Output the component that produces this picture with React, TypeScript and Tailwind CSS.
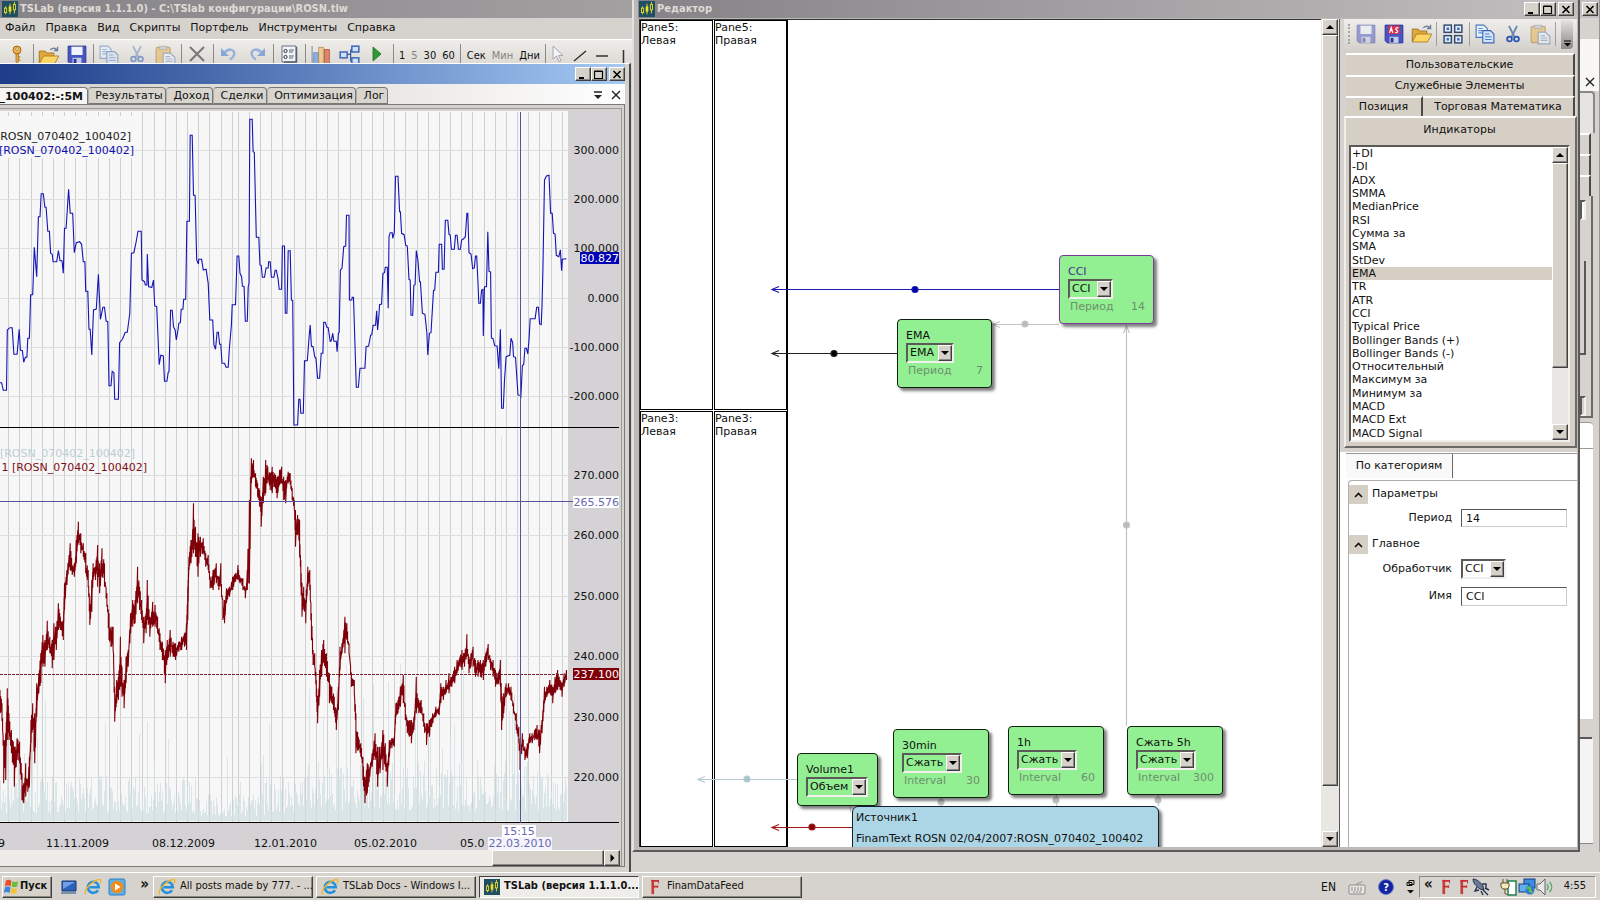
import type { ReactNode } from "react";

const raised = "border border-t-white border-l-white border-r-[#404040] border-b-[#404040] bg-[#d6d2ca] shadow-[inset_-1px_-1px_0_#8a8884]";
const sunken = "border-2 border-t-[#5c5a58] border-l-[#5c5a58] border-r-[#f2f0ec] border-b-[#f2f0ec]";
const narrow = "font-['DejaVu_Sans_Condensed','DejaVu_Sans',sans-serif] [font-stretch:condensed]";

/* ---------- icons ---------- */

function Svg({ children, size = 18, dim = false }: { children: ReactNode; size?: number; dim?: boolean }) {
  return (
    <svg width={size} height={size} viewBox="0 0 18 18" className={dim ? "shrink-0 opacity-50" : "shrink-0"} fill="none">
      {children}
    </svg>
  );
}

const Logo = () => (
  <Svg size={16}>
    <rect width="18" height="18" fill="#1f4f63" />
    <path d="M4 6v9M9 3v12M14 1v13" stroke="#f0e020" strokeWidth="1" />
    <rect x="2.8" y="8" width="2.4" height="5" fill="#1f4f63" stroke="#f0e020" />
    <rect x="7.5" y="6" width="3" height="6" fill="#f0e020" />
    <rect x="12.8" y="4" width="2.4" height="6" fill="#1f4f63" stroke="#f0e020" />
  </Svg>
);

const KeyIcon = () => (
  <Svg>
    <circle cx="9" cy="5" r="4" fill="#eeb04a" stroke="#a86a1c" />
    <circle cx="9" cy="4" r="1.3" fill="#f4f0e8" stroke="#a86a1c" strokeWidth=".6" />
    <path d="M8 9h2.4v8l-1.2 1L8 17z" fill="#eeb04a" stroke="#a86a1c" strokeWidth=".8" />
    <path d="M10.4 12h2M10.4 15h2" stroke="#a86a1c" />
  </Svg>
);

const FolderIcon = () => (
  <Svg size={22}>
    <path d="M1 15V5h5l1 1.5h6V15z" fill="#e0a83c" stroke="#9a7020" strokeWidth=".7" />
    <path d="M1 15.5 4.5 9H17l-3.5 6.5z" fill="#fbd565" stroke="#a67a20" strokeWidth=".7" />
    <path d="M10 4c2-2 4-2 5.500 0M16 1.500v3h-3" stroke="#6a7c98" strokeWidth="1.100" />
  </Svg>
);

const SaveIcon = ({ dim, all }: { dim?: boolean; all?: boolean }) => (
  <Svg size={20} dim={dim}>
    <path d="M1 1h16v16H3l-2-2z" fill="#4a55c4" stroke="#2a3488" strokeWidth=".8" />
    <rect x="4" y="1.500" width="10" height="7.500" fill={all ? "#d8304c" : "#f0f4fc"} />
    {all && <path d="M5 8l1.500-5L8 8M5.500 6h2M13 3.500c-3-1-3 1.500-1.500 2s1 3-1.500 2" stroke="#fff" />}
    <rect x="5" y="11.500" width="8" height="5.500" fill="#c4cce8" />
    <rect x="6" y="12.500" width="2.500" height="4" fill="#2a3488" />
  </Svg>
);

const CopyIcon = ({ dim }: { dim?: boolean }) => (
  <Svg size={20} dim={dim}>
    <path d="M1 1h7l3 3v8H1z" fill="#e8f0fc" stroke="#4a78b8" />
    <path d="M3 4h4M3 6h6M3 8h6" stroke="#5a90d8" />
    <path d="M7 6h7l3 3v8H7z" fill="#d4e4fa" stroke="#3868ac" />
    <path d="M9 9h4M9 11.500h6M9 14h6" stroke="#4a80cc" />
  </Svg>
);

const CutIcon = ({ dim }: { dim?: boolean }) => (
  <Svg dim={dim}>
    <path d="M5 1l5.500 11M13 1 7.500 12" stroke="#6888b0" strokeWidth="1.800" />
    <circle cx="5.500" cy="14" r="2.400" stroke="#2c58b4" strokeWidth="1.800" />
    <circle cx="12.500" cy="14" r="2.400" stroke="#2c58b4" strokeWidth="1.800" />
  </Svg>
);

const PasteIcon = () => (
  <Svg size={21} dim>
    <rect x="1" y="2" width="12" height="14" rx="1" fill="#e8b040" stroke="#9a7020" />
    <rect x="4" y="1" width="6" height="3" fill="#b8bcc4" stroke="#707880" strokeWidth=".6" />
    <path d="M7 7h6l4 3.500V17H7z" fill="#f0f4fc" stroke="#5878a8" />
    <path d="M9 10h4M9 12h6M9 14h6" stroke="#7090c0" />
  </Svg>
);

const DeleteIcon = () => (
  <Svg>
    <path d="M2 2l14 14M16 2 2 16" stroke="#77787a" strokeWidth="2" />
  </Svg>
);

const UndoIcon = ({ flip }: { flip?: boolean }) => (
  <Svg>
    <g transform={flip ? "matrix(-1 0 0 1 18 0)" : undefined}>
      <path d="M4 8c5-6 12-3 10 2-.6 2-2 3.500-4 4.500" stroke="#9ab2da" strokeWidth="2.600" />
      <path d="M1 3v8h8z" fill="#8aa6d6" />
    </g>
  </Svg>
);

const ListIcon = () => (
  <Svg>
    <path d="M2 1h14v16H2z" fill="#f0f4f8" stroke="#687080" />
    <path d="M16.500 2v15H4" stroke="#586070" strokeWidth="1.500" />
    <circle cx="5.500" cy="6" r="1.600" stroke="#30343c" />
    <circle cx="5.500" cy="12" r="1.600" stroke="#30343c" />
    <path d="M9 5h5M9 7h4M9 11h5M9 13h4" stroke="#586478" />
  </Svg>
);

const BarsIcon = () => (
  <Svg size={20}>
    <path d="M1 1v16h16" stroke="#8890a0" />
    <rect x="2.500" y="7" width="4" height="10" fill="#8ab0e0" stroke="#5478a8" strokeWidth=".6" />
    <rect x="7" y="2" width="4" height="15" fill="#f0c890" stroke="#a88048" strokeWidth=".6" />
    <rect x="12" y="4" width="4.500" height="13" fill="#e08468" stroke="#a04c38" strokeWidth=".6" />
  </Svg>
);

const FlowIcon = () => (
  <Svg size={21}>
    <path d="M6 8h4M10 4v10M10 4h2M10 14h2" stroke="#3a5490" />
    <rect x="1" y="6" width="6" height="5" fill="#cfe0fa" stroke="#3c68b8" strokeWidth="1.300" />
    <rect x="11" y="1" width="6" height="5" fill="#cfe0fa" stroke="#3c68b8" strokeWidth="1.300" />
    <rect x="11" y="11" width="6" height="5" fill="#cfe0fa" stroke="#3c68b8" strokeWidth="1.300" />
  </Svg>
);

const PlayIcon = () => (
  <Svg>
    <path d="M5 2l8 7-8 7z" fill="#2f9a34" stroke="#1c6c22" strokeWidth=".8" />
  </Svg>
);

const PointerIcon = () => (
  <Svg>
    <path d="M4 1v13l3.500-3 2.500 5.500 2-1-2.500-5H14z" fill="#f4f4f6" stroke="#a4a8b4" />
  </Svg>
);

const GridIcon = () => (
  <Svg size={20}>
    {[1, 10.5].map((x) =>
      [1, 10.5].map((y) => (
        <g key={`${x}-${y}`}>
          <rect x={x} y={y} width="6.500" height="6.500" fill="#e0ecfc" stroke="#34486c" strokeWidth="1.300" />
          <rect x={x + 2.2} y={y + 2.2} width="2.200" height="2.200" fill="#3a68c0" />
        </g>
      ))
    )}
  </Svg>
);

const IeIcon = () => (
  <Svg>
    <path d="M14 12.200A5.500 5.500 0 1 1 14.800 9.200H5.500" stroke="#2390dd" strokeWidth="2.600" />
    <path d="M1.500 16.500C-.5 12 9 1.500 16 1.500c1.500.5 1 2.500 0 4" stroke="#f0b428" strokeWidth="1.300" />
  </Svg>
);

const MediaIcon = () => (
  <Svg>
    <rect x="1" y="1" width="16" height="16" rx="1.500" fill="#5ab0ea" stroke="#2a80c4" />
    <circle cx="9" cy="9" r="6.300" fill="#f08c1c" />
    <path d="M7 5.500 12.500 9 7 12.500z" fill="#fff" />
  </Svg>
);

const DesktopIcon = () => (
  <Svg>
    <path d="M2 3h14v10H2z" fill="#2c62ba" stroke="#18356c" />
    <path d="M3 4h12L3 11z" fill="#6fa0e8" />
    <path d="M1 15h15" stroke="#7890a8" strokeWidth="2" />
  </Svg>
);

const FlagIcon = () => (
  <Svg size={17}>
    <path d="M3 3c2-1.500 4-1.500 6 0L8 9C6 7.500 4 7.500 2 9z" fill="#e8502c" />
    <path d="M10 3.500c2 1 4 1 6 0L15 9c-2 1-4 1-6 0z" fill="#6cbc3c" />
    <path d="M2 10c2-1.500 4-1.500 6 0l-1 6c-2-1.500-4-1.500-6 0z" fill="#3c84dc" />
    <path d="M9 10.500c2 1 4 1 6 0L14 16c-2 1-4 1-6 0z" fill="#f4c430" />
  </Svg>
);

const FinamIcon = () => (
  <Svg size={16}>
    <path d="M6.500 1v16" stroke="#c83c3c" strokeWidth="3" />
    <path d="M5 2h8M6 8.500h6" stroke="#c82c30" strokeWidth="2" />
    <path d="M13 1v4M12 7v3" stroke="#c82c30" />
  </Svg>
);

const Triangle = ({ up, right }: { up?: boolean; right?: boolean }) => (
  <svg width="8" height="8" viewBox="0 0 8 8" className="shrink-0">
    <path d={right ? "M2.500 0v8l4-4z" : up ? "M0 6h8L4 2z" : "M0 2h8L4 6z"} fill="#000" />
  </svg>
);

/* ---------- shared bits ---------- */

function CaptionButton({ kind }: { kind: "min" | "max" | "close" }) {
  return (
    <button aria-label={kind} className={`flex h-[14px] w-4 items-center justify-center ${raised}`}>
      <svg width="10" height="9" viewBox="0 0 10 9" fill="none" stroke="#000">
        {kind === "min" && <path d="M1 8h5" strokeWidth="2" />}
        {kind === "max" && <path d="M.5 1.500h8v7h-8zM.5 1h8" strokeWidth="1.200" />}
        {kind === "close" && <path d="M1.500 1l7 7M8.500 1l-7 7" strokeWidth="1.600" />}
      </svg>
    </button>
  );
}

function Captions() {
  return (
    <div className="ml-auto flex items-center">
      <CaptionButton kind="min" />
      <CaptionButton kind="max" />
      <span className="w-[2px]" />
      <CaptionButton kind="close" />
    </div>
  );
}

function ScrollColumn({ thumb }: { thumb: string }) {
  return (
    <div className="flex w-4 shrink-0 flex-col bg-[#e9e7e4]">
      <button aria-label="up" className={`flex h-4 shrink-0 items-center justify-center ${raised}`}>
        <Triangle up />
      </button>
      <div className={`${thumb} ${raised}`} />
      <button aria-label="down" className={`mt-auto flex h-4 shrink-0 items-center justify-center ${raised}`}>
        <Triangle />
      </button>
    </div>
  );
}

function Combo({ id, label, value, width, tone }: { id: string; label: string; value: string; width: string; tone: string }) {
  return (
    <div className={`relative h-5 ${width} ${sunken} ${tone}`}>
      <select id={id} aria-label={label} className="block h-full w-full appearance-none bg-transparent pl-[2px] leading-4 outline-none">
        <option>{value}</option>
      </select>
      <span className={`pointer-events-none absolute inset-y-0 right-0 flex w-[14px] items-center justify-center ${raised}`}>
        <Triangle />
      </span>
    </div>
  );
}

/* ---------- chart ---------- */

// x, y pairs on a 2.45 x 3 grid
const CCI =
  "0,848 4,848 8,871 16,871 18,690 24,683 30,683 34,763 42,763 47,688 50,750 55,752 58,787 62,772 66,772 68,715 72,715 75,584 80,584 84,442 90,530 94,350 98,350 101,281 106,281 110,322 113,322 117,394 121,394 124,460 128,463 130,485 139,485 143,452 147,482 152,482 155,520 158,385 162,385 168,268 172,340 178,340 182,458 187,428 195,425 200,433 204,485 208,485 210,574 215,574 218,688 221,688 225,765 229,630 236,627 241,523 246,658 252,622 256,622 260,663 264,665 267,857 272,857 275,814 279,818 281,898 290,898 293,728 300,718 307,697 312,697 318,640 322,460 328,458 334,423 338,394 346,394 348,540 354,545 356,555 360,555 361,462 364,560 372,562 376,540 379,617 384,620 390,794 394,766 400,768 403,844 409,844 412,817 414,815 418,631 422,631 425,680 429,690 432,720 436,690 438,670 442,668 444,628 448,628 450,598 455,598 458,364 464,364 466,106 471,106 474,286 478,286 482,480 486,492 487,478 494,478 498,510 505,508 510,550 514,660 521,660 524,735 528,748 532,697 535,697 538,733 541,733 544,790 550,790 554,802 559,802 562,745 567,675 569,614 577,614 581,468 585,468 588,520 592,530 594,558 598,560 601,664 606,664 608,560 610,550 612,58 618,58 620,155 623,157 628,412 634,412 637,495 640,497 643,532 648,532 652,504 657,504 658,485 662,485 665,532 671,532 674,511 677,511 681,535 684,568 690,568 692,438 697,438 699,640 703,640 706,452 711,452 714,600 717,602 720,975 729,975 732,898 735,898 737,940 743,940 746,782 753,782 758,700 760,675 763,738 767,740 771,770 774,775 778,835 783,835 787,760 791,760 793,667 797,667 801,682 804,683 809,724 812,722 815,700 818,724 824,724 826,755 829,700 831,697 834,510 838,505 842,440 847,438 849,346 855,346 856,600 862,600 863,592 866,592 873,862 878,862 882,805 894,805 897,740 903,738 908,706 911,704 914,676 920,676 923,632 925,690 928,650 930,614 935,612 938,520 942,518 944,502 949,502 951,625 953,410 956,398 961,398 962,415 966,398 969,229 975,229 979,335 981,335 984,400 990,404 994,436 998,438 1002,538 1005,540 1007,646 1011,646 1014,556 1017,554 1020,452 1024,482 1028,545 1030,545 1035,640 1041,643 1046,700 1048,765 1052,700 1056,698 1062,572 1065,570 1068,517 1074,517 1076,433 1082,433 1084,508 1088,508 1091,361 1097,361 1100,403 1103,405 1106,448 1113,448 1116,406 1120,406 1123,448 1128,448 1131,420 1135,417 1140,411 1144,340 1146,340 1149,458 1154,462 1158,506 1162,504 1165,468 1168,468 1171,550 1173,610 1177,610 1180,570 1183,568 1184,708 1187,560 1192,560 1195,395 1198,514 1202,516 1204,714 1208,716 1212,737 1218,738 1222,806 1226,688 1229,925 1233,925 1236,840 1240,770 1249,766 1252,715 1256,728 1258,770 1263,772 1269,885 1275,886 1276,895 1280,796 1283,794 1286,745 1290,745 1293,762 1296,720 1299,656 1311,656 1315,622 1319,622 1322,672 1326,674 1328,620 1330,510 1334,240 1339,228 1345,226 1349,340 1353,340 1356,400 1360,402 1363,466 1369,470 1373,450 1376,512 1378,478 1388,476";

// x, high, low on the same grid
const PRICE =
  "0,810,880 5,850,900 9,960,1090 14,940,1080 18,805,960 22,880,960 28,930,1000 35,980,1100 42,955,1020 48,965,1030 54,1060,1140 58,1090,1150 63,1030,1130 68,1080,1115 72,1010,1100 76,900,970 80,850,930 85,880,1030 90,790,890 95,760,820 100,700,790 105,645,740 110,660,740 116,602,690 122,650,700 128,660,745 132,610,720 138,620,690 143,550,630 148,590,630 155,600,660 158,490,570 164,450,495 172,370,450 177,435,465 182,430,470 187,360,430 192,305,370 198,340,400 204,370,410 210,400,460 216,450,500 220,560,615 225,480,575 228,430,480 234,440,480 239,375,500 244,430,520 250,385,470 256,430,500 262,520,560 267,580,660 272,620,680 277,620,690 281,800,905 286,780,850 290,770,840 295,650,800 299,740,830 304,780,865 309,710,790 314,690,740 320,580,640 325,540,620 331,540,610 337,440,550 342,500,570 347,540,600 352,590,670 358,580,640 361,480,600 367,590,650 374,545,620 380,555,620 386,590,640 392,640,690 398,665,720 405,690,790 410,660,720 417,630,710 424,665,710 430,670,720 438,665,695 445,650,690 452,640,680 457,610,690 460,500,600 463,410,450 468,360,430 474,250,400 479,320,410 485,340,470 491,350,410 498,355,400 504,400,440 510,405,450 515,470,505 522,450,510 530,430,490 536,470,510 541,430,500 546,540,600 550,540,610 555,505,550 562,500,530 570,470,510 577,460,485 583,435,480 588,470,490 595,475,510 601,505,535 606,450,510 611,240,490 616,115,190 621,120,170 626,160,200 631,190,230 636,210,260 640,230,320 645,170,250 651,120,220 656,140,190 662,160,210 667,140,220 673,160,200 679,170,235 685,150,195 690,140,190 695,170,240 700,180,250 706,155,190 711,160,190 716,205,240 721,240,270 724,270,380 729,285,345 734,300,410 737,420,500 740,490,590 744,500,560 749,540,610 754,440,500 759,450,510 763,580,660 767,690,735 771,700,740 775,780,830 778,830,910 783,750,830 788,690,770 793,660,730 800,700,770 807,760,850 813,800,850 819,830,880 824,870,930 829,800,870 833,680,750 838,670,700 845,590,700 850,610,660 855,670,700 861,760,800 868,780,820 872,880,1000 878,950,990 884,970,1010 889,1010,1080 894,1070,1150 900,1030,1120 906,1040,1070 912,1000,1040 919,940,1020 925,980,1100 931,980,1060 938,930,1050 944,970,1040 949,1030,1100 954,960,1010 960,955,985 966,950,980 970,850,890 975,840,880 981,800,860 988,765,850 993,850,900 998,900,940 1003,900,950 1008,900,970 1014,890,930 1020,770,880 1026,840,880 1032,840,880 1038,880,920 1045,910,975 1052,900,950 1060,880,910 1068,860,890 1076,860,885 1080,790,850 1086,800,840 1093,780,820 1100,760,820 1107,770,800 1114,740,790 1120,720,760 1127,710,740 1132,690,750 1138,700,740 1144,643,710 1149,710,760 1154,700,740 1159,680,740 1165,720,770 1171,720,770 1177,720,770 1184,720,780 1190,700,740 1196,672,720 1202,720,750 1208,720,770 1214,750,800 1220,760,790 1226,720,800 1229,820,930 1234,820,880 1240,790,830 1246,790,820 1252,800,840 1258,850,880 1265,880,930 1271,920,970 1274,970,1050 1280,940,980 1286,980,1020 1292,970,1015 1298,940,970 1304,940,970 1310,930,960 1316,915,960 1322,930,1000 1328,900,940 1334,800,850 1340,800,830 1347,780,820 1354,800,850 1360,770,820 1366,750,810 1370,770,800 1377,790,830 1382,760,800 1388,750,780";

function makeRandom(seed: number) {
  let s = seed;
  return () => {
    s = (s * 16807) % 2147483647;
    return s / 2147483647;
  };
}

const parse = (s: string) => s.split(" ").map((p) => p.split(",").map(Number));

const cciPath = "M" + parse(CCI).map(([x, y]) => `${(x / 2.45).toFixed(1)} ${(y / 3 + 100).toFixed(1)}`).join("L");

function buildPrice() {
  const rnd = makeRandom(77);
  const rows = parse(PRICE);
  const out: string[] = [];
  rows.forEach(([x, hi, lo], i) => {
    const [nx, nhi, nlo] = rows[i + 1] ?? [x, hi, lo];
    for (let k = 0; k < 3; k++) {
      const t = k / 3;
      const h = hi + (nhi - hi) * t;
      const l = lo + (nlo - lo) * t;
      const squeeze = k === 0 ? 0 : (l - h) * 0.48;
      const px = ((x + (nx - x) * t) / 2.45).toFixed(1);
      out.push(`${px} ${((h + squeeze * rnd()) / 3 + 420).toFixed(1)}`);
      out.push(`${px} ${((l - squeeze * rnd()) / 3 + 420).toFixed(1)}`);
    }
  });
  return "M" + out.join("L");
}

function buildVolume() {
  const rnd = makeRandom(4021);
  let d = "";
  for (let x = 0; x < 567; x++) {
    const busy = x > 300 && x < 560 ? 1.3 : x > 195 && x < 265 ? 0.6 : 1;
    const spike = rnd() > 0.93 ? 45 + rnd() * 45 : 0;
    const h = (8 + Math.pow(rnd(), 1.5) * 38 + spike) * busy;
    d += `M${x + 0.5} 821V${(821 - h).toFixed(0)}`;
  }
  return d + "M501.5 821V436";
}

const pricePath = buildPrice();
const volumePath = buildVolume();

const gridX = [
  ...Array.from({ length: 21 }, (_, i) => Math.round(8.3 + i * 11.17) + 0.5),
  ...Array.from({ length: 30 }, (_, i) => Math.round(237.8 + i * 11.17) + 0.5),
];

const cciTicks: [number, string][] = [
  [150, "300.000"], [199, "200.000"], [248, "100.000"], [298, "0.000"], [347, "-100.000"], [396, "-200.000"],
];
const priceTicks: [number, string][] = [
  [475, "270.000"], [535, "260.000"], [596, "250.000"], [656, "240.000"], [717, "230.000"], [777, "220.000"],
];
const dates: [number, string][] = [
  [46, "11.11.2009"], [152, "08.12.2009"], [254, "12.01.2010"], [354, "05.02.2010"], [460, "05.0"],
];

function Chart() {
  return (
    <svg className="min-h-0 w-full flex-1 bg-[#d4d2d4] text-[11px]" role="img" aria-label="ROSN">
      <g transform="translate(0 -111)">
        <rect y="111" width="568" height="712" fill="#f7f7f7" />
        <g shapeRendering="crispEdges">
          {gridX.map((x) => (
            <path key={x} d={`M${x} ${x < 140 ? 427 : 112}V823${x < 140 ? `M${x} 112v4M${x} 158V427` : ""}`} stroke="#cfcfcf" />
          ))}
          {[...cciTicks, ...priceTicks].map(([y]) => (
            <path key={y} d={`M0 ${y + 0.5}H568`} stroke="#dedede" />
          ))}
        </g>
        <path d={volumePath} stroke="#cfdfe2" strokeWidth="1" opacity=".75" shapeRendering="crispEdges" />
        <path d={pricePath} fill="none" stroke="#7f0008" strokeWidth="1.100" />
        <path d={cciPath} fill="none" stroke="#1414b4" strokeWidth="1.100" />
        <g shapeRendering="crispEdges">
          <path d="M0 427.500H619M0 822.500H619" stroke="#000" />
          <path d="M0 674.500H568" stroke="#7f2030" strokeDasharray="3 1" />
          <path d="M0 501.500H573M520.500 112V823" stroke="#54549c" />
        </g>
        <g fill="#111">
          {[...cciTicks, ...priceTicks].map(([y, t]) => (
            <text key={t} x="619" y={y + 4} textAnchor="end">{t}</text>
          ))}
          {dates.map(([x, t]) => (
            <text key={t} x={x} y="847">{t}</text>
          ))}
          <text x="-2" y="847">9</text>
        </g>
        <rect x="580" y="252" width="39" height="12" fill="#0000b4" />
        <text x="619" y="262" textAnchor="end" fill="#fff">80.827</text>
        <rect x="573" y="496" width="46" height="12" fill="#fff" />
        <text x="619" y="506" textAnchor="end" fill="#6a6ab0">265.576</text>
        <rect x="573" y="668" width="46" height="12" fill="#7f0008" />
        <text x="619" y="678" textAnchor="end" fill="#fff">237.100</text>
        <rect x="502" y="825" width="34" height="12" fill="#fff" />
        <text x="519" y="835" textAnchor="middle" fill="#6a6ab0">15:15</text>
        <rect x="488" y="837" width="64" height="13" fill="#f4f4fc" />
        <text x="520" y="847" textAnchor="middle" fill="#6a6ab0">22.03.2010</text>
        <text x="131" y="140" textAnchor="end" fill="#222">[ROSN_070402_100402]</text>
        <text x="134" y="154" textAnchor="end" fill="#0f0fae">[ROSN_070402_100402]</text>
        <text x="135" y="457" textAnchor="end" fill="#bccfd2">[ROSN_070402_100402]</text>
        <text x="147" y="471" textAnchor="end" fill="#7f0f18">1 [ROSN_070402_100402]</text>
      </g>
    </svg>
  );
}

/* ---------- left window ---------- */

const menu = ["Файл", "Правка", "Вид", "Скрипты", "Портфель", "Инструменты", "Справка"];

const tools: ([string, ReactNode] | null)[] = [
  ["key", <KeyIcon />], null,
  ["open", <FolderIcon />], ["save", <SaveIcon />], null,
  ["copy", <CopyIcon dim />], ["cut", <CutIcon dim />], ["paste", <PasteIcon />], null,
  ["delete", <DeleteIcon />], null,
  ["undo", <UndoIcon />], ["redo", <UndoIcon flip />], null,
  ["list", <ListIcon />], null,
  ["chart", <BarsIcon />], ["scheme", <FlowIcon />], ["run", <PlayIcon />],
];

const Sep = () => (
  <span className="flex h-full w-1 shrink-0 justify-center pt-1">
    <span className="h-full w-px bg-[#8c8a88]" />
  </span>
);

const chartTabs: [string, string][] = [
  ["Результаты", "w-[78px]"], ["Доход", "w-[47px]"], ["Сделки", "w-[54px]"], ["Оптимизация", "w-[89px]"], ["Лог", "w-8"],
];

function MainWindow() {
  return (
    <section className="flex min-w-0 flex-col overflow-hidden bg-[#d6d3ce]">
      <header className={`flex h-[18px] shrink-0 items-center gap-[2px] bg-linear-to-r from-[#858387] to-[#a3a0a2] pl-[2px] text-[11px] font-bold whitespace-nowrap text-[#dedbd6] ${narrow}`}>
        <Logo />
        <h1>TSLab (версия 1.1.1.0) - C:\TSlab конфигурации\ROSN.tlw</h1>
      </header>
      <nav className="flex h-[21px] shrink-0 items-center gap-[10px] pl-[5px] text-[11px]">
        {menu.map((m) => (
          <button key={m}>{m}</button>
        ))}
      </nav>
      <div className="flex h-6 shrink-0 items-start overflow-hidden border-t border-white bg-linear-to-b from-[#efedea] to-[#dedbd6] pl-[3px] text-[11px]">
        {tools.map((t, i) =>
          t ? (
            <button key={i} aria-label={t[0]} className="flex w-7 shrink-0 justify-center pt-[5px]">
              {t[1]}
            </button>
          ) : (
            <Sep key={i} />
          )
        )}
        <Sep />
        <div className={`flex gap-[6px] px-1 pt-2 ${narrow}`}>
          <button>1</button>
          <button className="text-[#85827e]">5</button>
          <button>30</button>
          <button>60</button>
        </div>
        <Sep />
        <div className={`flex gap-[6px] px-1 pt-2 ${narrow}`}>
          <button>Сек</button>
          <button className="text-[#85827e]">Мин</button>
          <button>Дни</button>
        </div>
        <Sep />
        <button aria-label="pointer" className="flex w-[26px] justify-center pt-[5px]"><PointerIcon /></button>
        <svg className="mt-2 h-4 w-16 shrink-0" stroke="#333" strokeWidth="1.500" fill="none">
          <path d="M6 13 18 3M28 8h12M55.500 2v13" />
        </svg>
      </div>

      <div className="mr-px flex min-h-0 flex-1 flex-col border-t border-r-2 border-t-white border-r-[#4c4a4a] pr-1">
        <header className="flex h-5 shrink-0 items-center bg-linear-to-r from-[#1e3c88] to-[#a6caf4]">
          <Captions />
        </header>
        <div className="flex h-5 shrink-0 items-end bg-linear-to-r from-[#d6d3ce] via-[#e4e1de] to-white text-[11px]">
          <button className="h-[17px] w-[88px] overflow-hidden rounded-tr border-t border-r border-[#7a7876] bg-[#f6f5f4] font-bold whitespace-nowrap">
            <span className="flex justify-end pr-1 leading-[15px]">_100402:-:5M</span>
          </button>
          {chartTabs.map(([t, w]) => (
            <button key={t} className={`h-[17px] rounded-t border border-l-[#b0aeaa] border-[#7a7876] bg-[#d8d5cf] pl-1 leading-[15px] whitespace-nowrap ${w}`}>
              {t}
            </button>
          ))}
          <span className="mr-1 mb-1 ml-auto flex items-center gap-2">
            <button aria-label="tab list">
              <svg width="10" height="10" viewBox="0 0 10 10"><path d="M1 2h8" stroke="#222" strokeWidth="1.500" /><path d="M1 5h8L5 9z" fill="#222" /></svg>
            </button>
            <button aria-label="close tab">
              <svg width="10" height="10" viewBox="0 0 10 10"><path d="M1 1l8 8M9 1 1 9" stroke="#222" strokeWidth="1.400" /></svg>
            </button>
          </span>
        </div>
        <div className="mb-[5px] flex min-h-0 flex-1 flex-col border-y border-r border-[#7c7a78] pt-[3px] pr-[2px]">
          <div className="flex min-h-0 flex-1 flex-col border-t border-r border-[#9c9a98] pt-[2px] pr-px">
            <Chart />
            <div className="flex h-4 shrink-0 justify-end bg-[#eeece8]">
              <div className={`w-[112px] ${raised}`} />
              <button aria-label="right" className={`flex w-4 items-center justify-center ${raised}`}>
                <Triangle right />
              </button>
            </div>
          </div>
        </div>
      </div>
    </section>
  );
}

/* ---------- editor ---------- */

interface NodeProps {
  name: string;
  value: string;
  box: string;
  combo: string;
  param?: [string, string];
  active?: boolean;
}

const nodes: NodeProps[] = [
  { name: "CCI", value: "CCI", box: "left-[419px] top-[235px] w-[95px] h-[69px]", combo: "w-[45px]", param: ["Период", "14"], active: true },
  { name: "EMA", value: "EMA", box: "left-[257px] top-[299px] w-[95px] h-[69px]", combo: "w-[48px]", param: ["Период", "7"] },
  { name: "Volume1", value: "Объем", box: "left-[157px] top-[733px] w-[81px] h-[53px]", combo: "w-[62px]" },
  { name: "30min", value: "Сжать", box: "left-[253px] top-[709px] w-[96px] h-[69px]", combo: "w-[60px]", param: ["Interval", "30"] },
  { name: "1h", value: "Сжать", box: "left-[368px] top-[706px] w-[96px] h-[69px]", combo: "w-[60px]", param: ["Interval", "60"] },
  { name: "Сжать 5h", value: "Сжать", box: "left-[487px] top-[706px] w-[96px] h-[69px]", combo: "w-[60px]", param: ["Interval", "300"] },
];

function Node({ name, value, box, combo, param, active }: NodeProps) {
  return (
    <div
      className={`absolute rounded border bg-[#92ef92] px-2 pt-2 shadow-[3px_3px_3px_rgba(0,0,0,0.5)] ${box} ${active ? "border-[#7a3c9c]" : "border-[#102010]"}`}
    >
      <div className={`leading-[15px] ${active ? "text-[#4a2c8c]" : ""}`}>{name}</div>
      <Combo id={`node-${name}`} label={name} value={value} width={combo} tone="bg-[#92ef92]" />
      {param && (
        <div className="flex justify-between pl-[2px] leading-[15px] text-[#6f8f6f]">
          <span>{param[0]}</span>
          <span>{param[1]}</span>
        </div>
      )}
    </div>
  );
}

function Edges() {
  return (
    <svg className="absolute inset-0 h-full w-full" fill="none">
      <g stroke="#1c1cae" strokeWidth="1.200"><path d="M419 269.500H132M139 266.500l-7 3 7 3" /><circle cx="275" cy="269.500" r="3" fill="#0000b4" /></g>
      <g stroke="#222" strokeWidth="1.200"><path d="M257 333.500H132M139 330.500l-7 3 7 3" /><circle cx="194" cy="333.500" r="3" fill="#000" /></g>
      <g stroke="#c4c4c4" strokeWidth="1.200">
        <path d="M419 304.500H353M360 301.500l-7 3 7 3" /><circle cx="385" cy="304" r="3" fill="#bbb" />
        <path d="M486.500 706V306M483.500 313l3-7 3 7" /><circle cx="486.500" cy="505" r="3" fill="#bbb" />
        <path d="M301.500 778v8M416.500 775v11M518.500 775v11M210.500 786v6" />
        <circle cx="301" cy="782" r="3" fill="#bbb" /><circle cx="416" cy="780" r="3" fill="#bbb" /><circle cx="518" cy="780" r="3" fill="#bbb" />
      </g>
      <g stroke="#b4cdd0" strokeWidth="1.200"><path d="M157 759.500H58M65 756.500l-7 3 7 3" /><circle cx="107" cy="759" r="3" fill="#a8c4c8" /></g>
      <g stroke="#a01818" strokeWidth="1.200"><path d="M212 807.500H132M139 804.500l-7 3 7 3" /><circle cx="172" cy="807" r="3" fill="#7f0008" /></g>
    </svg>
  );
}

const Pane = ({ n, side }: { n: number; side: string }) => (
  <div className="border border-black leading-[13px]">
    Pane{n}:<br />
    {side}
  </div>
);

function Canvas() {
  return (
    <div className="relative min-w-0 flex-1 overflow-hidden border-t border-l border-[#333] bg-white text-[11px]">
      <div className="flex h-full w-[148px] flex-col gap-px border-r border-black">
        <div className="grid h-[390px] shrink-0 grid-cols-2 gap-px">
          <Pane n={5} side="Левая" />
          <Pane n={5} side="Правая" />
        </div>
        <div className="grid min-h-0 flex-1 grid-cols-2 gap-px">
          <Pane n={3} side="Левая" />
          <Pane n={3} side="Правая" />
        </div>
      </div>
      <Edges />
      {nodes.map((n) => (
        <Node key={n.name} {...n} />
      ))}
      <div className="absolute top-[786px] left-[212px] h-[60px] w-[307px] rounded-md border border-[#102030] bg-[#acd6e6] px-[3px] pt-[2px] whitespace-nowrap shadow-[3px_3px_3px_rgba(0,0,0,0.5)]">
        <div className="leading-[18px]">Источник1</div>
        <div className="pt-[2px] leading-[20px]">FinamText ROSN 02/04/2007:ROSN_070402_100402</div>
      </div>
    </div>
  );
}

const indicators = [
  "+DI", "-DI", "ADX", "SMMA", "MedianPrice", "RSI", "Сумма за", "SMA", "StDev", "EMA", "TR", "ATR", "CCI",
  "Typical Price", "Bollinger Bands (+)", "Bollinger Bands (-)", "Относительный", "Максимум за", "Минимум за",
  "MACD", "MACD Ext", "MACD Signal",
];

const catTab = "border-t-2 border-r-2 border-t-white border-r-[#4c4a48] bg-[#d6cfc5]";

const GroupButton = ({ title }: { title: string }) => (
  <div className="flex h-[19px] items-center gap-1">
    <button aria-label={title} className="flex h-[19px] w-[19px] items-center justify-center bg-[#d6cfc5]">
      <svg width="9" height="6" viewBox="0 0 9 6" fill="none"><path d="M1 5l3.500-3.500L8 5" stroke="#111" strokeWidth="1.600" /></svg>
    </button>
    <span>{title}</span>
  </div>
);

function SidePanel() {
  return (
    <aside className="flex w-[238px] shrink-0 flex-col border-l border-[#555] bg-[#d6d3ce] text-[11px]">
      <div className="ml-1 flex h-[34px] shrink-0 items-center bg-linear-to-b from-[#f0eeec] to-[#d2cfca] pr-1 pb-1">
        <span className="mr-px ml-[4px] h-5 w-0 border-l-2 border-dotted border-[#a8a6a4]" />
        <button aria-label="save" className="flex w-[29px] justify-center"><SaveIcon dim /></button>
        <button aria-label="save as" className="flex w-7 justify-center"><SaveIcon all /></button>
        <button aria-label="open" className="flex w-7 justify-center"><FolderIcon /></button>
        <span className="h-6 w-px bg-[#a09e9c]" />
        <button aria-label="layout" className="flex w-8 justify-center"><GridIcon /></button>
        <span className="h-6 w-px bg-[#a09e9c]" />
        <button aria-label="copy" className="flex w-[29px] justify-center"><CopyIcon /></button>
        <button aria-label="cut" className="flex w-[27px] justify-center"><CutIcon /></button>
        <button aria-label="paste" className="flex w-[29px] justify-center"><PasteIcon /></button>
        <span className="h-6 w-px bg-[#a09e9c]" />
        <button aria-label="more" className="ml-auto flex h-[29px] w-3 items-end justify-center rounded-r bg-linear-to-b from-[#e4e2e0] to-[#8c8a88] pb-[2px]">
          <svg width="7" height="7" viewBox="0 0 7 7"><path d="M0 1h7" stroke="#000" /><path d="M0 3h7L3.500 6.500z" fill="#000" /></svg>
        </button>
      </div>
      <div className="mr-[2px] ml-[6px] flex shrink-0 flex-col text-center">
        <button className={`h-[22px] ${catTab}`}>Пользовательские</button>
        <button className={`h-[21px] ${catTab}`}>Служебные Элементы</button>
        <div className="flex h-[20px]">
          <button className={`w-[77px] ${catTab}`}>Позиция</button>
          <button className={`flex-1 ${catTab}`}>Торговая Математика</button>
        </div>
      </div>
      <div className="ml-1 flex h-[332px] shrink-0 flex-col border-2 border-t-white border-r-[#6c6a68] border-b-[#6c6a68] border-l-[#f0eeea] bg-[#d6cfc5] pr-[5px] pb-1 pl-[3px]">
        <h2 className="h-[27px] shrink-0 text-center leading-[23px]">Индикаторы</h2>
        <div className={`flex min-h-0 flex-1 bg-white ${sunken}`}>
          <ul className="flex min-w-0 flex-1 flex-col">
            {indicators.map((t) => (
              <li key={t} className={`flex min-h-0 flex-1 items-center pl-px leading-[13px] whitespace-nowrap ${t === "EMA" ? "bg-[#d6cfc5]" : ""}`}>
                {t}
              </li>
            ))}
          </ul>
          <ScrollColumn thumb="h-[205px]" />
        </div>
      </div>
      <div className="mt-1 flex min-h-0 flex-1 flex-col bg-white pt-px pl-[6px]">
        <div className="flex h-[25px] shrink-0 border-t border-[#9a9896]">
          <button className="w-[107px] border-r border-[#6a6866] bg-[#f8f9f8]">По категориям</button>
        </div>
        <div className="mt-[2px] ml-[2px] flex flex-1 flex-col rounded-tl border-t border-l border-[#b0aeac] pt-1">
          <GroupButton title="Параметры" />
          <div className="mt-[5px] flex h-[18px] items-center">
            <label htmlFor="period" className="w-[103px] text-right">Период</label>
            <input id="period" defaultValue="14" className="ml-[9px] h-[18px] w-[106px] border border-t-[#555] border-l-[#555] border-r-[#ccc] border-b-[#ccc] pl-1 outline-none" />
          </div>
          <div className="mt-2"><GroupButton title="Главное" /></div>
          <div className="mt-[5px] flex h-5 items-center">
            <label htmlFor="handler" className="mr-[9px] w-[103px] text-right">Обработчик</label>
            <Combo id="handler" label="Обработчик" value="CCI" width="w-[45px]" tone="bg-white" />
          </div>
          <div className="mt-2 flex h-[19px] items-center">
            <label htmlFor="name" className="w-[103px] text-right">Имя</label>
            <input id="name" defaultValue="CCI" className="ml-[9px] h-[19px] w-[106px] border border-t-[#555] border-l-[#555] border-r-[#ccc] border-b-[#ccc] pl-1 outline-none" />
          </div>
        </div>
      </div>
    </aside>
  );
}

function EditorWindow() {
  return (
    <section className="mb-5 flex min-w-0 flex-col border-r-2 border-b-2 border-l-2 border-r-[#5a5858] border-b-[#5a5858] border-l-[#e4e2de] bg-[#bcb9b6] pr-px pb-[3px] pl-1">
      <header className="mb-px flex h-[18px] shrink-0 items-center gap-[2px] bg-linear-to-r from-[#858387] to-[#c2bfc0] pr-[3px] pl-px text-[11px] font-bold text-[#dedbd6]">
        <Logo />
        <h2 className={narrow}>Редактор</h2>
        <Captions />
      </header>
      <div className="flex min-h-0 flex-1 pl-px">
        <Canvas />
        <div className="flex border-x border-[#e8e6e2]">
          <ScrollColumn thumb="h-[751px]" />
        </div>
        <SidePanel />
      </div>
    </section>
  );
}

/* part of the window that lies behind the editor */
function BackStrip() {
  return (
    <div className="mb-5 flex min-w-0 flex-col overflow-hidden border-r border-[#9a9896] bg-[#d6d3ce]">
      <div className="flex h-[18px] shrink-0 items-center justify-center bg-[#c2bfc0]">
        <CaptionButton kind="close" />
      </div>
      <div className="h-[21px] shrink-0" />
      <div className="flex h-[52px] shrink-0 items-end justify-center bg-[#f8f7f6] pb-1">
        <svg width="10" height="10" viewBox="0 0 10 10"><path d="M1 1l8 8M9 1 1 9" stroke="#222" strokeWidth="1.400" /></svg>
      </div>
      <div className="mr-1 h-[42px] shrink-0 rounded-tr border-t-2 border-r-2 border-[#8a8886] bg-[#e6e4e2]" />
      {[0, 1, 2].map((i) => (
        <div key={i} className="mr-2 h-[21px] shrink-0 border-t-2 border-r-2 border-t-white border-r-[#4c4a48]" />
      ))}
      <div className="mr-[6px] flex h-[222px] shrink-0 flex-col justify-between border-r-2 border-b-2 border-[#6c6a68] pt-1">
        <div className={`h-5 w-[6px] bg-white ${sunken}`} />
        <div className="h-[94px] w-[6px] border-r-2 border-b-2 border-[#5a5858]" />
        <div className={`h-5 w-[6px] ${sunken}`} />
      </div>
      <div className="mt-1 mr-[6px] h-[27px] shrink-0 rounded-tr border-y border-[#9a9896] bg-white" />
      <div className="mr-[6px] min-h-0 flex-1 bg-white" />
      <div className="mr-[7px] h-5 shrink-0 border-b-2 border-[#5a5858] bg-[#d6d3ce]" />
      <div className="mr-[6px] mb-2 h-[105px] shrink-0 border-b border-[#8a8886] bg-[#f4f4f4]" />
    </div>
  );
}

/* ---------- taskbar ---------- */

function Task({ icon, title, active }: { icon: ReactNode; title: string; active?: boolean }) {
  return (
    <button
      className={`flex h-[22px] w-[160px] items-center gap-1 px-1 whitespace-nowrap ${
        active ? "border border-t-[#404040] border-l-[#404040] border-r-white border-b-white bg-[#efedea] font-bold" : raised
      }`}
    >
      {icon}
      <span>{title}</span>
    </button>
  );
}

function Taskbar() {
  return (
    <footer className={`flex h-7 shrink-0 items-center border-t border-white bg-[#d6d3ce] pr-1 pl-[2px] text-[11px] ${narrow}`}>
      <button className={`flex h-[22px] w-[50px] shrink-0 items-center font-bold ${raised}`}>
        <FlagIcon />
        Пуск
      </button>
      <div className="flex w-[101px] shrink-0 items-center gap-[6px] pl-2">
        <DesktopIcon />
        <IeIcon />
        <MediaIcon />
        <span className="ml-auto pr-1 pb-1 text-[15px] font-bold">»</span>
      </div>
      <div className="flex gap-[3px]">
        <Task icon={<IeIcon />} title="All posts made by 777. - ..." />
        <Task icon={<IeIcon />} title="TSLab Docs - Windows I..." />
        <Task icon={<Logo />} title="TSLab (версия 1.1.1.0..." active />
        <Task icon={<FinamIcon />} title="FinamDataFeed" />
      </div>
      <div className="ml-auto flex items-center gap-3">
        <span className="text-[12px]">EN</span>
        <svg width="18" height="16" viewBox="0 0 18 16" fill="none" stroke="#8c8a88">
          <rect x="1" y="6" width="16" height="9" rx="1" fill="#e8e6e4" />
          <path d="M3 9h12M3 11h12M5 13h8" strokeDasharray="2 1" />
          <path d="M9 6c0-4 3 0 5-4" />
        </svg>
        <svg width="16" height="16" viewBox="0 0 16 16">
          <circle cx="8" cy="8" r="7.500" fill="#1424a0" stroke="#7080c8" />
          <text x="8" y="12" textAnchor="middle" fill="#fff" fontSize="11" fontWeight="bold">?</text>
        </svg>
        <svg width="9" height="16" viewBox="0 0 9 16" fill="none" stroke="#111">
          <path d="M3 1.500h5v4H3zM1 3.500h5v3H1z" fill="#d6d3ce" />
          <path d="M1 11h7l-3.500 3.500z" fill="#111" stroke="none" />
        </svg>
      </div>
      <div className="ml-1 flex h-[22px] w-[177px] items-center border border-t-[#8a8886] border-l-[#8a8886] border-r-white border-b-white pr-[9px] pl-1">
        <span className="pb-1 text-[15px] font-bold">«</span>
        <div className="flex flex-1 items-center pl-[5px]">
          <FinamIcon />
          <span className="w-[2px]" />
          <FinamIcon />
          <Svg>
            <path d="M1 1c4 0 7 3 10 7l1 4-4-1C4 8 1 5 1 1z" fill="#687898" stroke="#28344c" />
            <path d="M5 9l-2 4 4-1M10 6l4 0 0 5M11 12l5 5M9 13l2 4M13 10l4 2" stroke="#28344c" strokeWidth="1.400" />
          </Svg>
          <span className="w-[10px]" />
          <Svg>
            <rect x="8" y="3" width="8" height="14" fill="#fff" stroke="#208050" strokeWidth="1.500" />
            <path d="M3 1v4M7 1v4M1 5h8v4l-2 2H3L1 9zM5 11v5h3" fill="#f4e8c0" stroke="#605028" />
          </Svg>
          <Svg>
            <rect x="6" y="1" width="11" height="9" fill="#3c8ce0" stroke="#183c80" />
            <rect x="1" y="6" width="10" height="8" fill="#60b0f0" stroke="#183c80" />
            <circle cx="12" cy="12" r="4.500" fill="#2c78d0" />
            <path d="M9 11c2-3 4-1 3 1s2 1 2 3" stroke="#60c840" strokeWidth="2" />
          </Svg>
          <Svg>
            <path d="M1 6h3l5-5v16l-5-5H1z" fill="#e8e8e8" stroke="#666" />
            <path d="M11 6c1.500 2 1.500 4 0 6M13.500 4c3 3 3 7 0 10" stroke="#48a060" strokeWidth="1.200" />
          </Svg>
        </div>
        <time>4:55</time>
      </div>
    </footer>
  );
}

export default function App() {
  return (
    <div className="flex h-screen flex-col overflow-hidden bg-[#d6d3ce] font-['DejaVu_Sans',Verdana,sans-serif] text-[#111]">
      <main className="grid min-h-0 flex-1 grid-cols-[632fr_948fr_20fr] grid-rows-[minmax(0,1fr)]">
        <MainWindow />
        <EditorWindow />
        <BackStrip />
      </main>
      <Taskbar />
    </div>
  );
}
